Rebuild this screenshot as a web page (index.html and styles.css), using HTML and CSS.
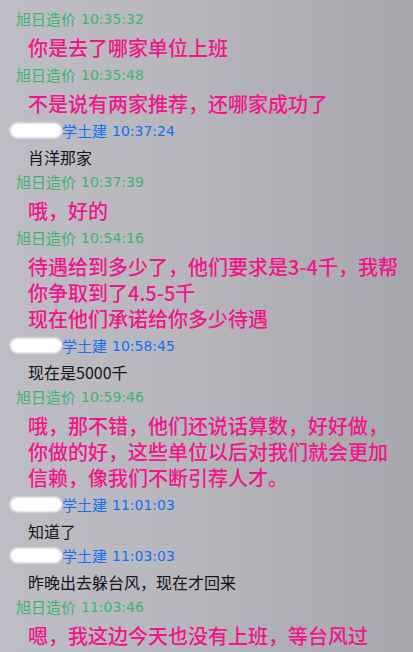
FILE: index.html
```html
<!DOCTYPE html>
<html lang="zh">
<head>
<meta charset="utf-8">
<link rel="stylesheet" href="styles.css">
</head>
<body>
<div class="chat">
  <div class="head green"><span class="name">旭日造价</span> <span class="time">10:35:32</span></div>
  <div class="msg pink">你是去了哪家单位上班</div>

  <div class="head green"><span class="name">旭日造价</span> <span class="time">10:35:48</span></div>
  <div class="msg pink">不是说有两家推荐，还哪家成功了</div>

  <div class="head blue"><span class="blur"></span><span class="name">学土建</span> <span class="time">10:37:24</span></div>
  <div class="msg dark">肖洋那家</div>

  <div class="head green"><span class="name">旭日造价</span> <span class="time">10:37:39</span></div>
  <div class="msg pink">哦，好的</div>

  <div class="head green"><span class="name">旭日造价</span> <span class="time">10:54:16</span></div>
  <div class="msg pink">待遇给到多少了，他们要求是3-4千，我帮<br>你争取到了4.5-5千<br>现在他们承诺给你多少待遇</div>

  <div class="head blue"><span class="blur"></span><span class="name">学土建</span> <span class="time">10:58:45</span></div>
  <div class="msg dark">现在是5000千</div>

  <div class="head green"><span class="name">旭日造价</span> <span class="time">10:59:46</span></div>
  <div class="msg pink">哦，那不错，他们还说话算数，好好做，<br>你做的好，这些单位以后对我们就会更加<br>信赖，像我们不断引荐人才。</div>

  <div class="head blue"><span class="blur"></span><span class="name">学土建</span> <span class="time">11:01:03</span></div>
  <div class="msg dark">知道了</div>

  <div class="head blue"><span class="blur"></span><span class="name">学土建</span> <span class="time">11:03:03</span></div>
  <div class="msg dark">昨晚出去躲台风，现在才回来</div>

  <div class="head green"><span class="name">旭日造价</span> <span class="time">11:03:46</span></div>
  <div class="msg pink">嗯，我这边今天也没有上班，等台风过</div>
</div>
</body>
</html>
```

FILE: styles.css
```css
html, body {
  margin: 0;
  padding: 0;
  height: 100%;
}
body {
  background: linear-gradient(to right, #bebdc5 0%, #b7b6bd 45%, #a7a6ac 100%);
  font-family: "Noto Sans CJK SC", "Noto Sans", sans-serif;
  overflow: hidden;
}
.chat {
  padding-top: 8.5px;
  display: flex;
  flex-direction: column;
}
.head {
  height: 20px;
  line-height: 20px;
  padding-left: 16px;
  white-space: nowrap;
  display: flex;
  align-items: center;
}
.head .name {
  font-size: 15px;
}
.head .time {
  font-family: "DejaVu Sans", sans-serif;
  font-size: 14px;
  margin-left: 5px;
}
.green { color: #3cb46e; }
.blue { color: #1470f0; }
.blur {
  display: inline-block;
  width: 52px;
  height: 15px;
  margin-left: -6px;
  background: #fff;
  border-radius: 8px;
  filter: blur(1.2px);
}
.msg {
  padding-left: 28px;
  white-space: nowrap;
}
.pink {
  color: #f2158a;
  font-size: 20px;
  font-weight: 500;
  line-height: 26px;
  padding-top: 6px;
  padding-bottom: 4px;
}
.dark {
  color: #151515;
  font-size: 16px;
  line-height: 20px;
  padding-top: 6px;
  padding-bottom: 5px;
}
```
